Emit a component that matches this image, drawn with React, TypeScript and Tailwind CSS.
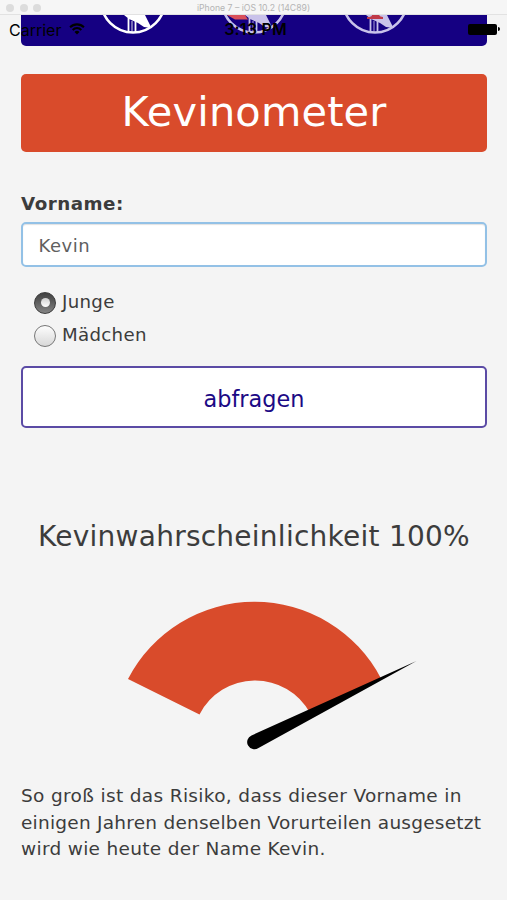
import React from 'react'

const WindowBar: React.FC = () => (
  <div className="relative flex h-[15px] shrink-0 items-center justify-center border-b border-[#e2e2e2] bg-[#f6f6f6]">
    <div className="absolute left-[6px] top-[4px] flex gap-[5.5px]">
      {[0, 1, 2].map((dot) => (
        <span key={dot} className="h-[8px] w-[8px] rounded-full bg-[#dcdcdc]" />
      ))}
    </div>
    <span className="pt-[2px] font-['Inter'] text-[8.7px] leading-[15px] text-[#b4b4b4]">
      iPhone 7 – iOS 10.2 (14C89)
    </span>
  </div>
)

interface BadgeProps {
  cx: number
  color: string
  accent?: 'small' | 'wide'
}

const Badge: React.FC<BadgeProps> = ({ cx, color, accent }) => (
  <g transform={`translate(${cx} 0)`}>
    <circle cx="0" cy="-14.5" r="32" fill="none" stroke={color} strokeWidth="2.6" />
    <path d="M-9 0H12L18.500 13L11 12L5 8L-4 4Z" fill={color} />
    <path d="M-4.500 3V17.500M2.500 6V17" stroke={color} strokeWidth="1.8" />
    <path d="M-1 6V17" stroke={color} strokeWidth="1.2" opacity="0.7" />
    {accent === 'small' && <path d="M-8 4V2Q-3 2 -3 0H4Q5 2 8 2V4Z" fill="#c03a48" />}
    {accent === 'wide' && <path d="M-27 0H-9L-6 4.500H-19Z" fill="#d9505a" />}
  </g>
)

const NavBanner: React.FC = () => (
  <div className="h-[31px] overflow-hidden rounded-b-[5px] bg-[#150082]">
    <svg width="466" height="31" viewBox="0 0 466 31">
      <Badge cx={112} color="#ffffff" />
      <Badge cx={233} color="#c9c2ea" accent="wide" />
      <Badge cx={354} color="#c9c2ea" accent="small" />
    </svg>
  </div>
)

const StatusBar: React.FC = () => (
  <div className="absolute inset-x-0 top-[15px] flex h-[28px] items-center justify-between pl-[9px] pr-[7px] font-['Inter'] text-black">
    <div className="flex flex-1 items-center gap-[8px]">
      <span className="pt-px text-[16px] leading-[28px]">Carrier</span>
      <svg width="16" height="12" viewBox="0 0 17 13" fill="none" stroke="#000" strokeWidth="2.2">
        <path d="M1 4.600a10.600 10.600 0 0 1 15 0" />
        <path d="M3.800 7.500a6.600 6.600 0 0 1 9.400 0" />
        <path d="M8.500 12.500L5.800 9.800a3.900 3.900 0 0 1 5.400 0Z" fill="#000" stroke="none" />
      </svg>
    </div>
    <span className="pl-[2px] text-[16px] font-semibold leading-[28px] tracking-[0.2px]">3:13 PM</span>
    <div className="flex flex-1 items-center justify-end gap-px">
      <span className="h-[11px] w-[29px] rounded-[2px] bg-black" />
      <span className="h-[4px] w-[2px] rounded-r-full bg-black" />
    </div>
  </div>
)

interface RadioProps {
  label: string
  checked?: boolean
}

const Radio: React.FC<RadioProps> = ({ label, checked = false }) => (
  <label className="flex h-[33px] items-center gap-[6px]">
    {checked ? (
      <span className="mt-[4px] flex h-[22px] w-[22px] items-center justify-center rounded-full border border-[#3c3c3c] bg-linear-to-b from-[#404040] to-[#858585]">
        <span className="h-[9px] w-[9px] rounded-full bg-linear-to-b from-[#d0d0d0] to-white" />
      </span>
    ) : (
      <span className="mt-[4px] h-[22px] w-[22px] rounded-full border-[1.500px] border-[#777] bg-linear-to-b from-[#fdfdfd] to-[#d8d8d8]" />
    )}
    <span className="pt-[2px] text-[18.2px] tracking-[0.3px]">{label}</span>
  </label>
)

const Gauge: React.FC = () => (
  <svg className="mx-auto block overflow-visible" width="300" height="160" viewBox="0 0 300 160">
    <path
      d="M24 84A142.500 142.500 0 0 1 277 83.500L206 118A62.500 62.500 0 0 0 95.500 119.500Z"
      fill="#d94b2b"
    />
    <path d="M312.500 66L154.500 153A7.200 7.200 0 1 1 147.500 140.500Z" fill="#000" />
  </svg>
)

const App: React.FC = () => {
  return (
    <div className="relative flex h-[900px] w-[507px] flex-col overflow-hidden bg-[#f4f4f4] font-['DejaVu_Sans',sans-serif] text-[#3c3c3c]">
      <WindowBar />
      <main className="flex flex-col pl-[21px] pr-[20px]">
        <NavBanner />
        <h1 className="mt-[28px] flex h-[78px] items-center justify-center rounded-[5px] bg-[#d94b2b] pb-[2px] text-[41.500px] tracking-[0.15px] text-white">
          Kevinometer
        </h1>
        <label className="mt-[39px] block h-[31px] text-[18.3px] font-bold leading-[26px] tracking-[0.5px]">Vorname:</label>
        <input
          className="h-[45px] w-full rounded-[5px] border-2 border-[#93c1e6] bg-white px-[15.5px] pt-[2px] text-[18px] tracking-[0.5px] text-[#606060] shadow-[inset_0_1px_1px_rgba(0,0,0,0.12)] outline-none"
          defaultValue="Kevin"
        />
        <div className="mt-[17px] flex flex-col pl-[13px]">
          <Radio label="Junge" checked />
          <Radio label="Mädchen" />
        </div>
        <button className="mt-[16px] h-[62px] rounded-[5px] border-2 border-[#5b4ba5] bg-white pt-[5px] text-[22.400px] text-[#1c0a85]">
          abfragen
        </button>
        <h2 className="mt-[88px] whitespace-nowrap text-center text-[28px] leading-[42px] tracking-[0.25px]">
          Kevinwahrscheinlichkeit 100%
        </h2>
        <div className="mt-[37px]">
          <Gauge />
        </div>
        <p className="mt-[28px] whitespace-nowrap text-[18.500px] leading-[26.500px] tracking-[0.24px]">
          <span className="tracking-[0.34px]">So groß ist das Risiko, dass dieser Vorname in</span>
          <br />
          einigen Jahren denselben Vorurteilen ausgesetzt
          <br />
          <span className="tracking-[0.31px]">wird wie heute der Name Kevin.</span>
        </p>
      </main>
      <StatusBar />
    </div>
  )
}

export default App
